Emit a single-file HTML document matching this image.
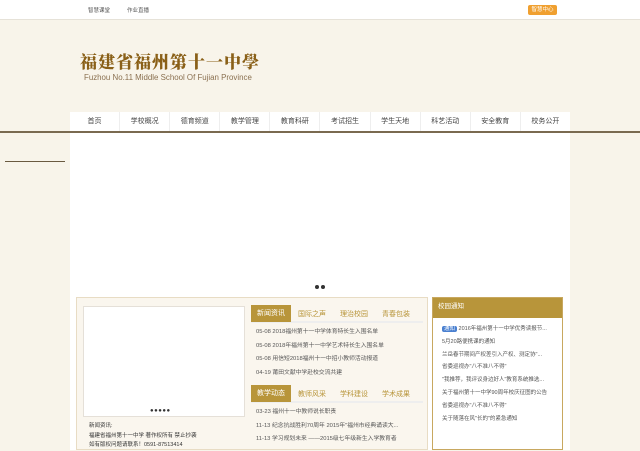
<!DOCTYPE html>
<html><head><meta charset="utf-8"><style>
*{margin:0;padding:0;box-sizing:border-box}
body{width:640px;height:450px;overflow:hidden;background:#f8f4ea;font-family:"Liberation Sans","Noto Sans CJK SC",sans-serif;font-size:6px;color:#555;position:relative}
.a{position:absolute}
.top{left:0;top:0;width:640px;height:20px;background:#fff;border-bottom:1px solid #e6e2d8}
.nav{left:70px;top:112px;width:500px;height:19px;background:#fff;display:flex}
.nav span{flex:1;text-align:center;line-height:19px;font-size:7px;color:#444;border-right:1px solid #eee}
.line{left:0;top:131px;width:640px;height:2px;background:#7a6a50}
.main{left:70px;top:133px;width:500px;height:317px;background:#fff}
.box{left:76px;top:297px;width:352px;height:153px;background:#faf6ee;border:1px solid #e8dcc4}
.tab{height:17px;display:flex;gap:0;align-items:center;border-bottom:2px solid #eee}
.tab b{background:#b8953a;color:#fff;font-weight:normal;padding:0 6px;line-height:17px;font-size:7px}
.tab i{font-style:normal;color:#b8953a;padding:0 7px;font-size:7px}
.li{font-size:5.8px;color:#555;height:13.5px;line-height:13.5px;padding-left:5px;white-space:nowrap;overflow:hidden}
.rp{left:432px;top:297px;width:131px;height:153px;background:#fff;border:1px solid #c8a860}
.rh{background:#b8953a;color:#fff;height:20px;line-height:18px;padding-left:5px;font-size:6.5px}
.rl{font-size:5.5px;height:12.8px;line-height:12.8px;padding-left:9px;white-space:nowrap;overflow:hidden;color:#555}
</style></head><body>
<div class="a top"><span class="a" style="left:88px;top:6px;font-size:5.5px">智慧课堂</span><span class="a" style="left:127px;top:6px;font-size:5.5px">作业直播</span><span class="a" style="left:528px;top:5px;width:29px;height:10px;background:#f0a030;color:#fff;font-size:5.5px;text-align:center;line-height:10px;border-radius:2px">智慧中心</span></div>
<div class="a" style="left:80px;top:48px;font-family:'Noto Serif CJK SC',serif;font-size:17px;font-weight:900;color:#8a6018;letter-spacing:1px">福建省福州第十一中學</div>
<div class="a" style="left:84px;top:73px;font-size:7.9px;color:#8a7050">Fuzhou No.11 Middle School Of Fujian Province</div>
<div class="a nav"><span>首页</span><span>学校概况</span><span>德育频道</span><span>教学管理</span><span>教育科研</span><span>考试招生</span><span>学生天地</span><span>科艺活动</span><span>安全教育</span><span style="border:0">校务公开</span></div>
<div class="a line"></div>
<div class="a" style="left:5px;top:161px;width:60px;height:1px;background:#6a5a40"></div>
<div class="a main"></div>
<div class="a" style="left:315px;top:285px;width:4px;height:4px;border-radius:50%;background:#333"></div>
<div class="a" style="left:321px;top:285px;width:4px;height:4px;border-radius:50%;background:#333"></div>
<div class="a box">
 <div class="a" style="left:6px;top:8px;width:162px;height:111px;background:#fff;border:1px solid #e5e0d8"></div>
 <div class="a" style="left:73px;top:110px;font-size:6px;letter-spacing:0.5px;color:#333">●●●●●</div>
 <div class="a" style="left:12px;top:124px;font-size:5.5px;line-height:9.5px;color:#333">新闻资讯:<br>福建省福州第十一中学 著作权所有 禁止抄袭<br>如有版权问题请联系！0591-87513414</div>
 <div class="a" style="left:174px;top:8px;width:172px">
  <div class="tab"><b>新闻资讯</b><i>国际之声</i><i>理治校园</i><i>青春包装</i></div>
  <div style="height:3px"></div>
  <div class="li">05-08 2018福州第十一中学体育特长生入围名单</div>
  <div class="li">05-08 2018年福州第十一中学艺术特长生入围名单</div>
  <div class="li">05-08 用信短2018福州十一中招小教师活动报道</div>
  <div class="li">04-19 莆田文献中学赴校交流共建</div>
  <div style="height:6px"></div>
  <div class="tab"><b>教学动态</b><i>教师风采</i><i>学科建设</i><i>学术成果</i></div>
  <div style="height:3px"></div>
  <div class="li">03-23 福州十一中教师说长职责</div>
  <div class="li">11-13 纪念抗战胜利70周年 2015年"福州市经典诵读大...</div>
  <div class="li">11-13 学习规划未来 ——2015级七年级新生入学教育者</div>
 </div>
</div>
<div class="a rp"><div class="rh">校园通知</div><div style="height:5px"></div>
 <div class="rl"><span style="background:#4a80d0;color:#fff;padding:0 2px;border-radius:2px">通知</span> 2016年福州第十一中学优秀读报节...</div>
 <div class="rl">5月20路便携课的通知</div>
 <div class="rl">兰岳春节期间产权差引入产权、测定协"...</div>
 <div class="rl">省委巡视办"八不准八不得"</div>
 <div class="rl">"我推荐，我评议身边好人"教育系统推选...</div>
 <div class="rl">关于福州第十一中学90周年校庆征图的公告</div>
 <div class="rl">省委巡视办"八不准八不得"</div>
 <div class="rl">关于随落在风"长的"的紧急通知</div>
</div>
</body></html>
